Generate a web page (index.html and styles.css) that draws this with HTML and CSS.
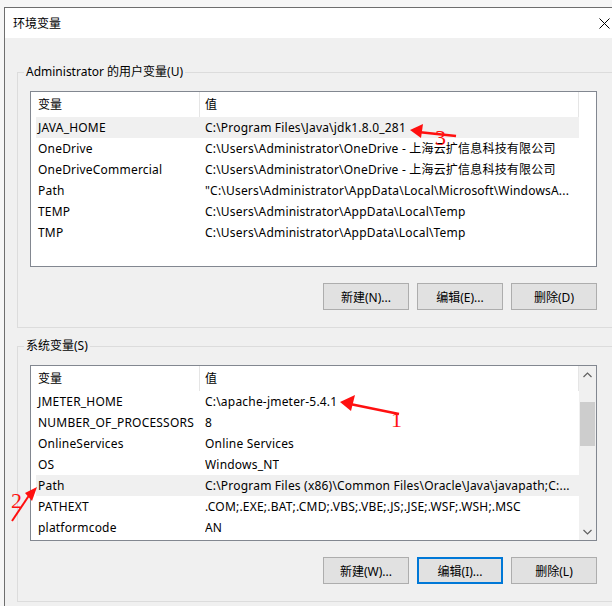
FILE: index.html
```html
<!DOCTYPE html>
<html lang="zh-CN">
<head>
  <meta charset="UTF-8">
  <title>环境变量</title>
  <link rel="stylesheet" href="styles.css">
</head>
<body>
  <div class="window">
    <div class="titlebar">
      <span class="title">环境变量</span>
      <svg class="close" width="11" height="11" viewBox="0 0 11 11">
        <path d="M0.5 0.5 L10.5 10.5 M10.5 0.5 L0.5 10.5" stroke="#000" stroke-width="1" fill="none"/>
      </svg>
    </div>

    <div class="content">
      <fieldset class="group">
        <legend>Administrator 的用户变量(U)</legend>
        <div class="listview">
          <div class="lv-main">
            <div class="lv-header">
              <div class="hd-name">变量</div>
              <div class="hd-value">值</div>
            </div>
            <div class="lv-row selected"><span class="c-name">JAVA_HOME</span><span class="c-value">C:\Program Files\Java\jdk1.8.0_281</span></div>
            <div class="lv-row"><span class="c-name">OneDrive</span><span class="c-value">C:\Users\Administrator\OneDrive - 上海云扩信息科技有限公司</span></div>
            <div class="lv-row"><span class="c-name">OneDriveCommercial</span><span class="c-value">C:\Users\Administrator\OneDrive - 上海云扩信息科技有限公司</span></div>
            <div class="lv-row"><span class="c-name">Path</span><span class="c-value">"C:\Users\Administrator\AppData\Local\Microsoft\WindowsA...</span></div>
            <div class="lv-row"><span class="c-name">TEMP</span><span class="c-value">C:\Users\Administrator\AppData\Local\Temp</span></div>
            <div class="lv-row"><span class="c-name">TMP</span><span class="c-value">C:\Users\Administrator\AppData\Local\Temp</span></div>
          </div>
          <div class="lv-gutter"></div>
        </div>
        <div class="buttons">
          <button class="btn">新建(N)...</button>
          <button class="btn">编辑(E)...</button>
          <button class="btn">删除(D)</button>
        </div>
      </fieldset>

      <fieldset class="group">
        <legend>系统变量(S)</legend>
        <div class="listview">
          <div class="lv-main">
            <div class="lv-header">
              <div class="hd-name">变量</div>
              <div class="hd-value">值</div>
            </div>
            <div class="lv-row"><span class="c-name">JMETER_HOME</span><span class="c-value">C:\apache-jmeter-5.4.1</span></div>
            <div class="lv-row"><span class="c-name">NUMBER_OF_PROCESSORS</span><span class="c-value">8</span></div>
            <div class="lv-row"><span class="c-name">OnlineServices</span><span class="c-value">Online Services</span></div>
            <div class="lv-row"><span class="c-name">OS</span><span class="c-value">Windows_NT</span></div>
            <div class="lv-row selected"><span class="c-name">Path</span><span class="c-value">C:\Program Files (x86)\Common Files\Oracle\Java\javapath;C:...</span></div>
            <div class="lv-row"><span class="c-name">PATHEXT</span><span class="c-value">.COM;.EXE;.BAT;.CMD;.VBS;.VBE;.JS;.JSE;.WSF;.WSH;.MSC</span></div>
            <div class="lv-row"><span class="c-name">platformcode</span><span class="c-value">AN</span></div>
          </div>
          <div class="scrollbar">
            <div class="sb-btn">
              <svg width="9" height="6" viewBox="0 0 9 6"><path d="M0.5 5 L4.5 1 L8.5 5" stroke="#606060" stroke-width="1.2" fill="none"/></svg>
            </div>
            <div class="sb-track">
              <div class="sb-thumb"></div>
            </div>
            <div class="sb-btn">
              <svg width="9" height="6" viewBox="0 0 9 6"><path d="M0.5 1 L4.5 5 L8.5 1" stroke="#606060" stroke-width="1.2" fill="none"/></svg>
            </div>
          </div>
        </div>
        <div class="buttons">
          <button class="btn">新建(W)...</button>
          <button class="btn focused">编辑(I)...</button>
          <button class="btn">删除(L)</button>
        </div>
      </fieldset>
    </div>
  </div>

  <!-- red hand-drawn annotations -->
  <svg class="annotations" width="612" height="606" viewBox="0 0 612 606">
    <g fill="#ff1010" stroke="#ff1010">
      <line x1="418" y1="132" x2="456" y2="136" stroke-width="2.5"/>
      <polygon points="410,130 423,124 421,138" stroke="none"/>
      <text x="435" y="145" class="mark">3</text>

      <line x1="350" y1="404" x2="399" y2="414" stroke-width="2.5"/>
      <polygon points="340,402 355,395 351,411" stroke="none"/>
      <text x="391" y="427" class="mark">1</text>

      <line x1="30" y1="494" x2="12" y2="521" stroke-width="2"/>
      <polygon points="37,487 25,493 32,501" stroke="none"/>
      <text x="11" y="508" class="mark">2</text>
    </g>
  </svg>
</body>
</html>
```

FILE: styles.css
```css
body {
  margin: 0;
  height: 606px;
  overflow: hidden;
  background-color: #f6f6f6;
  font-family: "Noto Sans", "Noto Sans CJK SC", sans-serif;
  font-size: 12px;
  color: #000;
  position: relative;
}

.window {
  margin: 7px 0 0 4px;
  width: 607px;
  border-left: 1px solid #6e6e6e;
  border-top: 1px solid #6e6e6e;
}

.titlebar {
  height: 30px;
  background-color: #fff;
  display: flex;
  justify-content: space-between;
  align-items: center;
  padding: 0 2px 0 8px;
}

.title {
  font-size: 12px;
}

.close {
  display: block;
}

.content {
  background-color: #f0f0f0;
  padding-top: 26px;
  height: 542px;
}

.group {
  box-sizing: border-box;
  width: 605px;
  margin: 0 0 0 12px;
  padding: 11px 0 17px 12px;
  border: 1px solid #dcdcdc;
}

.group + .group {
  margin-top: 10px;
}

.group legend {
  margin-left: -6px;
  padding: 0 2px;
  line-height: 16px;
}

.listview {
  box-sizing: border-box;
  width: 567px;
  height: 176px;
  border: 1px solid #828790;
  background-color: #fff;
  display: flex;
  overflow: hidden;
}

.lv-main {
  flex: 1;
}

.lv-gutter {
  width: 17px;
}

.lv-header {
  display: flex;
  height: 25px;
  line-height: 25px;
}

.hd-name {
  box-sizing: border-box;
  width: 169px;
  padding-left: 7px;
  border-right: 1px solid #e5e5e5;
}

.hd-value {
  flex: 1;
  padding-left: 5px;
  border-right: 1px solid #e5e5e5;
}

.lv-row {
  display: flex;
  margin-left: 5px;
  height: 21px;
  line-height: 21px;
  white-space: nowrap;
  letter-spacing: 0.2px;
}

.lv-row.selected {
  background-color: #f0f0f0;
}

.c-name {
  box-sizing: border-box;
  width: 169px;
  padding-left: 2px;
  flex-shrink: 0;
}

.c-value {
  overflow: hidden;
}

.scrollbar {
  width: 17px;
  background-color: #f0f0f0;
  display: flex;
  flex-direction: column;
}

.sb-btn {
  height: 17px;
  display: flex;
  align-items: center;
  justify-content: center;
}

.sb-track {
  flex: 1;
  padding: 19px 1px 0 1px;
}

.sb-thumb {
  height: 44px;
  background-color: #cdcdcd;
}

.buttons {
  width: 567px;
  display: flex;
  justify-content: flex-end;
  gap: 8px;
  margin-top: 16px;
}

.btn {
  box-sizing: border-box;
  width: 86px;
  height: 27px;
  padding: 0;
  border: 1px solid #adadad;
  background-color: #e1e1e1;
  font-family: "Noto Sans", "Noto Sans CJK SC", sans-serif;
  font-size: 12px;
  color: #000;
}

.btn.focused {
  border: 2px solid #0078d7;
}

.annotations {
  position: absolute;
  top: 0;
  left: 0;
  pointer-events: none;
}

.mark {
  font-family: "Liberation Serif", serif;
  font-size: 22px;
  stroke: none;
}
```
